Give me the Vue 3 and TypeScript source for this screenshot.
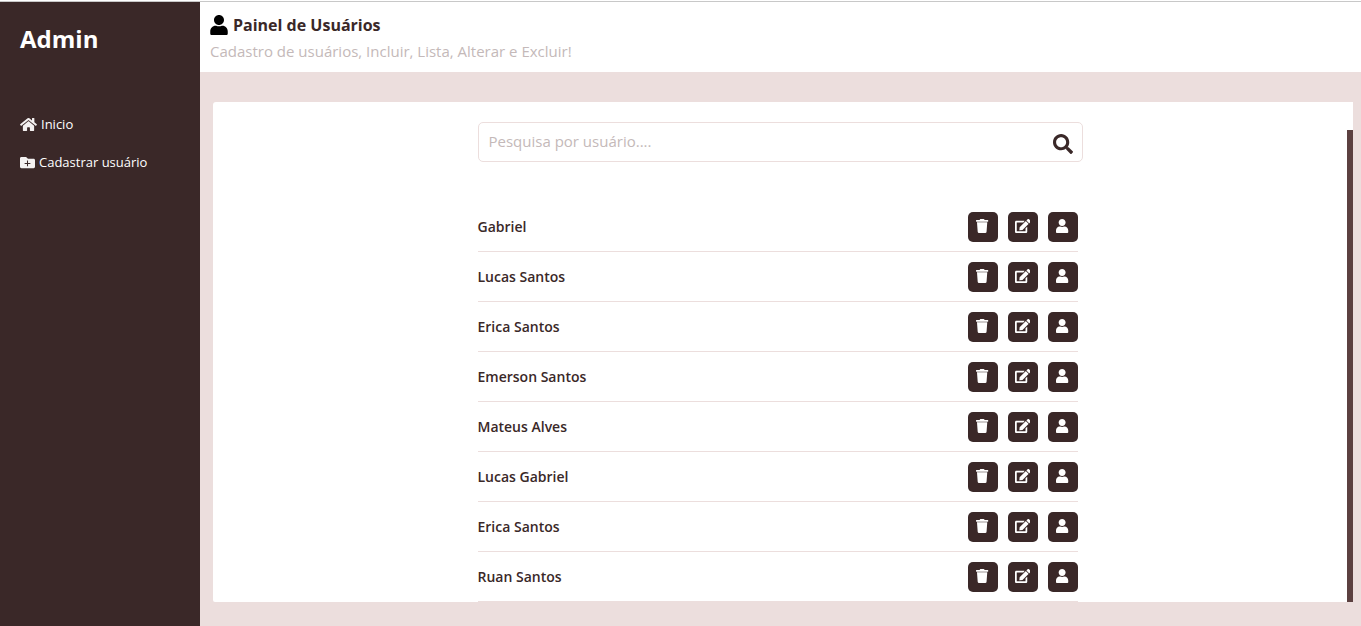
<script setup lang="ts">
import { ref } from 'vue'

interface User {
  id: number
  name: string
}

const search = ref('')
const users: User[] = [
  'Gabriel',
  'Lucas Santos',
  'Erica Santos',
  'Emerson Santos',
  'Mateus Alves',
  'Lucas Gabriel',
  'Erica Santos',
  'Ruan Santos',
].map((name, id) => ({ id, name }))

const personPath =
  'M224 256c70.700 0 128-57.300 128-128S294.700 0 224 0 96 57.300 96 128s57.300 128 128 128zm86 20h-13c-22.200 9-46.900 14-73 14s-50.800-5-73-14h-13C56 276 0 340 0 420v52c0 24 18 40 40 40h368c22 0 40-16 40-40v-52c0-80-56-144-138-144z'
</script>

<template>
  <div class="page">
    <aside class="sidebar">
      <h1 class="brand">Admin</h1>
      <nav class="menu">
        <a href="#inicio" class="menu-link">
          <svg class="icon-home" viewBox="0 0 576 512" aria-hidden="true">
            <path d="M280.370 148.260L96 300.110V464a16 16 0 0 0 16 16l112.060-.290a16 16 0 0 0 15.920-16V368a16 16 0 0 1 16-16h64a16 16 0 0 1 16 16v95.640a16 16 0 0 0 16 16.050L464 480a16 16 0 0 0 16-16V300L295.670 148.260a12.190 12.190 0 0 0-15.300 0zM571.600 251.470L488 182.560V44.050a12 12 0 0 0-12-12h-56a12 12 0 0 0-12 12v72.610L318.470 43a48 48 0 0 0-61 0L4.340 251.470a12 12 0 0 0-1.600 16.900l25.500 31A12 12 0 0 0 45.150 301l235.220-193.740a12.190 12.190 0 0 1 15.300 0L530.900 301a12 12 0 0 0 16.900-1.600l25.500-31a12 12 0 0 0-1.700-16.930z" />
          </svg>
          <span>Inicio</span>
        </a>
        <a href="#cadastrar" class="menu-link">
          <svg class="icon-folder" viewBox="0 0 512 512" aria-hidden="true">
            <path fill-rule="evenodd" d="M464 128H272l-64-64H48C21.490 64 0 85.490 0 112v288c0 26.510 21.490 48 48 48h416c26.510 0 48-21.490 48-48V176c0-26.510-21.490-48-48-48zM238 190h36v80h80v36h-80v80h-36v-80h-80v-36h80z" />
          </svg>
          <span>Cadastrar usuário</span>
        </a>
      </nav>
    </aside>

    <div class="content">
      <header class="topbar">
        <h2 class="title">
          <svg class="icon-title" viewBox="0 0 448 512" aria-hidden="true"><path :d="personPath" /></svg>
          <span>Painel de Usuários</span>
        </h2>
        <p class="subtitle">Cadastro de usuários, Incluir, Lista, Alterar e Excluir!</p>
      </header>

      <main class="card">
        <form class="search" role="search" @submit.prevent>
          <input v-model="search" class="search-input" type="text" placeholder="Pesquisa por usuário...." aria-label="Pesquisa por usuário" />
          <button class="search-button" type="submit" aria-label="Pesquisar">
            <svg class="icon-search" viewBox="0 0 512 512" aria-hidden="true">
              <path d="M505 442.700L405.300 343c-4.500-4.500-10.600-7-17-7H372c27.600-35.300 44-79.700 44-128C416 93.100 322.900 0 208 0S0 93.100 0 208s93.100 208 208 208c48.300 0 92.700-16.400 128-44v16.300c0 6.400 2.500 12.500 7 17l99.700 99.700c9.400 9.400 24.600 9.400 33.900 0l28.300-28.300c9.400-9.400 9.400-24.600.100-34zM208 336c-70.700 0-128-57.200-128-128 0-70.700 57.200-128 128-128 70.700 0 128 57.200 128 128 0 70.700-57.200 128-128 128z" />
            </svg>
          </button>
        </form>

        <ul class="users">
          <li v-for="user in users" :key="user.id" class="user">
            <span class="user-name">{{ user.name }}</span>
            <div class="actions">
              <button class="action" type="button" :aria-label="`Excluir ${user.name}`">
                <svg class="icon-action" viewBox="0 0 448 512" aria-hidden="true">
                  <path d="M432 36H312l-9.400-22.700A24 24 0 0 0 281.100 0H166.800a23.720 23.720 0 0 0-21.400 13.300L136 36H16A16 16 0 0 0 0 52v28a16 16 0 0 0 16 16h416a16 16 0 0 0 16-16V52a16 16 0 0 0-16-16zM62 467a48 48 0 0 0 47.900 45h228.200a48 48 0 0 0 47.900-45L412 120H36z" />
                </svg>
              </button>
              <button class="action" type="button" :aria-label="`Alterar ${user.name}`">
                <svg class="icon-action" viewBox="0 0 576 512" aria-hidden="true">
                  <path d="M402.600 83.200l90.200 90.200c3.800 3.800 3.800 10 0 13.800L274.400 405.600l-92.800 10.300c-12.400 1.400-22.900-9.100-21.500-21.500l10.300-92.800L388.800 83.200c3.800-3.800 10-3.800 13.800 0zm162-22.900l-48.800-48.800c-15.200-15.200-39.900-15.200-55.200 0l-35.400 35.400c-3.800 3.800-3.800 10 0 13.800l90.200 90.200c3.800 3.800 10 3.800 13.800 0l35.400-35.400c15.200-15.300 15.200-40 0-55.200zM384 346.200V448H64V128h229.800c3.200 0 6.200-1.300 8.500-3.500l40-40c7.600-7.600 2.200-20.500-8.500-20.500H48C21.500 64 0 85.500 0 112v352c0 26.500 21.500 48 48 48h352c26.500 0 48-21.500 48-48V306.200c0-10.700-12.900-16-20.500-8.500l-40 40c-2.200 2.300-3.500 5.300-3.500 8.500z" />
                </svg>
              </button>
              <button class="action" type="button" :aria-label="`Ver ${user.name}`">
                <svg class="icon-action" viewBox="0 0 448 512" aria-hidden="true"><path :d="personPath" /></svg>
              </button>
            </div>
          </li>
        </ul>
        <div class="scroll-thumb"></div>
      </main>
    </div>
  </div>
</template>

<style>
body {
  background: #ecdedd;
}
</style>

<style scoped>
.page {
  display: flex;
  box-sizing: border-box;
  min-height: 100vh;
  padding-top: 1px;
  background: linear-gradient(#fff 1px, #c8c8c8 1px, #c8c8c8 2px, #ecdedd 2px);
  color: #3a2828;
  font-family: "Open Sans", "Noto Sans", sans-serif;
}

svg {
  display: block;
  flex: none;
  fill: currentColor;
}

.sidebar {
  flex: none;
  width: 200px;
  box-sizing: border-box;
  margin-top: 1px;
  padding: 20px;
  background: #3a2828;
  color: #fff;
}

.brand {
  margin: 0;
  font-size: 24px;
  line-height: 34px;
}

.menu {
  display: flex;
  flex-direction: column;
  gap: 18px;
  margin-top: 58px;
}

.menu-link {
  display: flex;
  align-items: center;
  gap: 4px;
  color: #fff;
  font-size: 13px;
  line-height: 20px;
  text-decoration: none;
}

.menu-link svg {
  color: #f4f1f1;
}

.icon-home {
  width: 17px;
  height: 15px;
}

.icon-folder {
  width: 15px;
  height: 15px;
}

.content {
  flex: 1;
  min-width: 0;
  margin-top: 1px;
}

.topbar {
  box-sizing: border-box;
  min-height: 70px;
  padding: 10px;
  background: #fff;
}

.title {
  display: flex;
  align-items: center;
  gap: 5px;
  margin: 0;
  font-size: 16px;
  line-height: 26px;
}

.icon-title {
  width: 18px;
  height: 20px;
  color: #000;
}

.subtitle {
  margin: 3px 0 0;
  color: #c4b9b9;
  font-size: 15px;
  line-height: 20px;
}

.card {
  position: relative;
  display: flex;
  flex-direction: column;
  align-items: center;
  margin: 30px 8px 24px 13px;
  padding: 20px 10px 0 4px;
  border-radius: 3px 0 0 2px;
  background: #fff;
}

.search {
  display: flex;
  box-sizing: border-box;
  width: 100%;
  max-width: 605px;
  height: 40px;
  border: 1px solid #ecdedd;
  border-radius: 5px;
}

.search-input {
  flex: 1;
  min-width: 0;
  padding: 0 10px 2px;
  border: 0;
  outline: 0;
  background: transparent;
  color: #3a2828;
  font: 15px "Open Sans", "Noto Sans", sans-serif;
}

.search-input::placeholder {
  color: #c4b9b9;
  opacity: 1;
}

.search-button {
  padding: 4px 9px 0 10px;
  border: 0;
  background: transparent;
  color: #3a2828;
}

.icon-search {
  width: 20px;
  height: 20px;
}

.users {
  width: 100%;
  max-width: 605px;
  box-sizing: border-box;
  margin: 40px 0 0;
  padding: 0 5px 0 0;
  list-style: none;
}

.user {
  display: flex;
  align-items: center;
  justify-content: space-between;
  box-sizing: border-box;
  height: 50px;
  border-bottom: 1px solid #ecdedd;
}

.user-name {
  font-size: 14px;
  font-weight: 600;
  line-height: 20px;
}

.actions {
  display: flex;
  gap: 10px;
}

.action {
  display: flex;
  align-items: center;
  justify-content: center;
  width: 30px;
  height: 30px;
  padding: 0 0 2px;
  border: 0;
  border-radius: 5px;
  background: #3a2828;
  color: #fff;
}

.icon-action {
  height: 14px;
}

.scroll-thumb {
  position: absolute;
  top: 28px;
  right: 0;
  bottom: 0;
  width: 6px;
  background: #5c4040;
}
</style>
